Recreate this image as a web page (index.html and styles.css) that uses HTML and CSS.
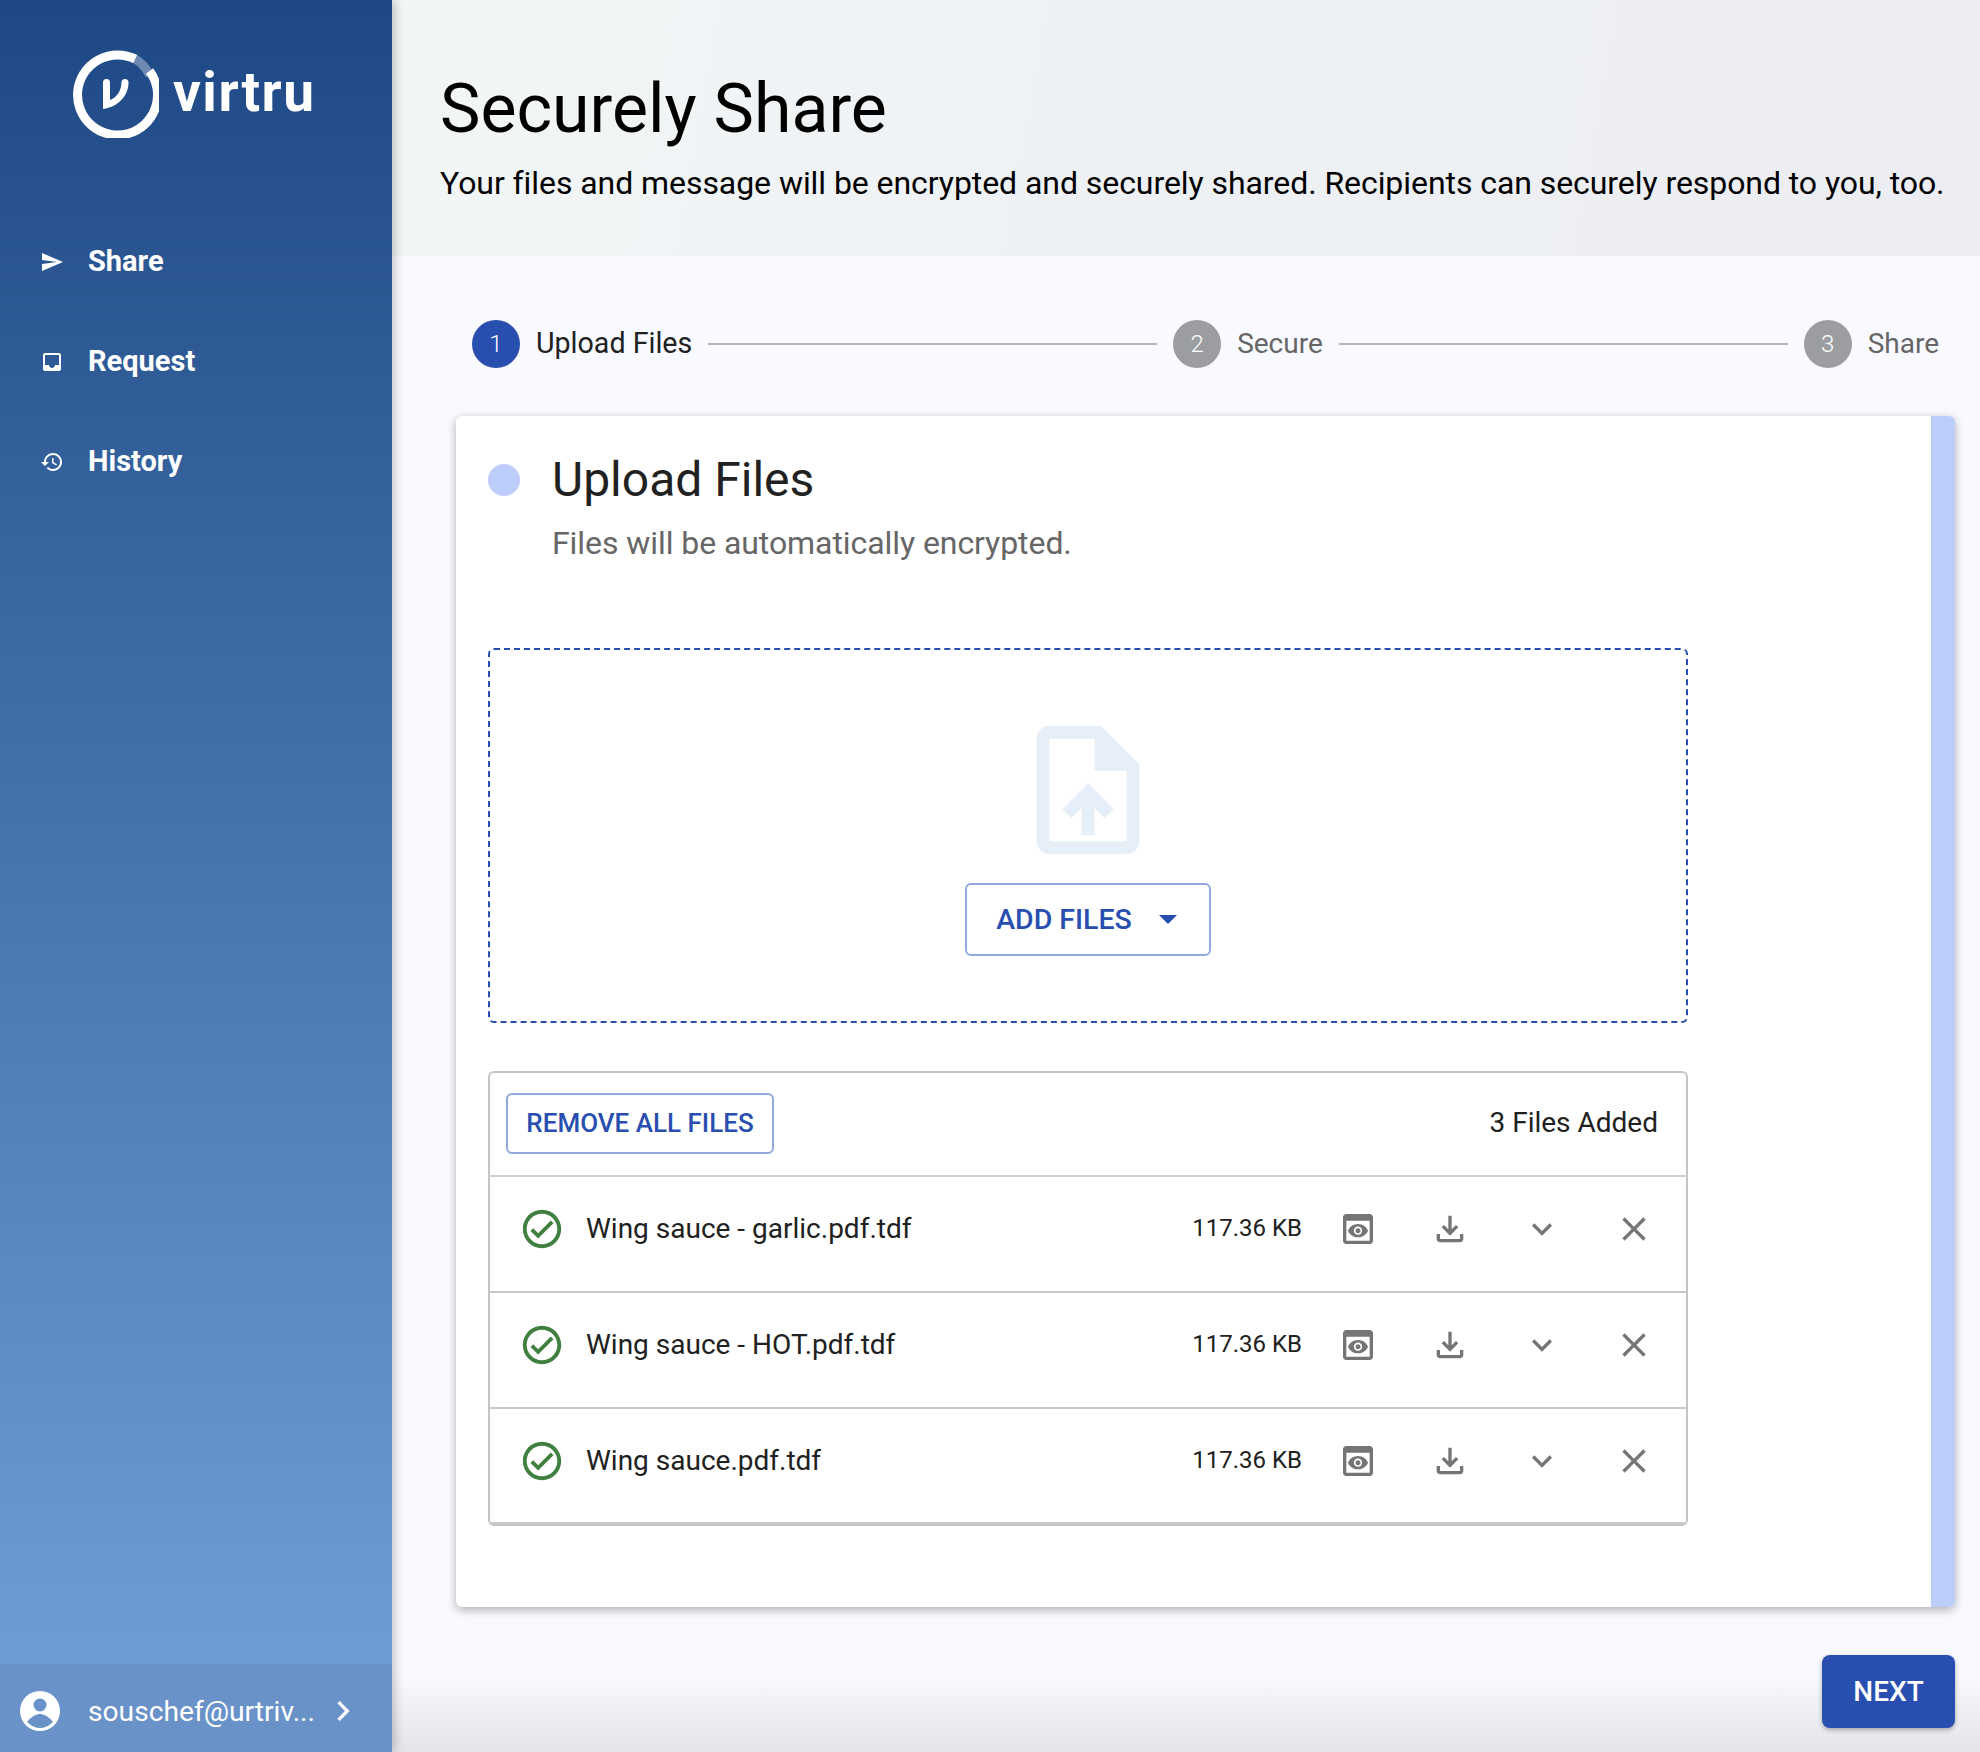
FILE: index.html
```html
<!DOCTYPE html>
<html lang="en">
<head>
<meta charset="utf-8"/>
<title>Securely Share</title>
<link rel="stylesheet" href="styles.css">
</head>
<body>
<svg class="sprite" xmlns="http://www.w3.org/2000/svg">
    <symbol id="i-preview" viewBox="0 0 24 24"><path d="M19 3H5c-1.11 0-2 .9-2 2v14c0 1.1.89 2 2 2h14c1.1 0 2-.9 2-2V5c0-1.1-.89-2-2-2zm0 16H5V7h14v12zm-5.5-6c0 .83-.67 1.5-1.5 1.5s-1.5-.67-1.5-1.5.67-1.5 1.5-1.5 1.5.67 1.5 1.5zM12 9c-2.73 0-5.06 1.66-6 4 .94 2.34 3.27 4 6 4s5.06-1.66 6-4c-.94-2.34-3.27-4-6-4zm0 6.5c-1.38 0-2.5-1.12-2.5-2.5s1.12-2.5 2.5-2.5 2.5 1.12 2.5 2.5-1.12 2.5-2.5 2.5z"/></symbol>
    <symbol id="i-download" viewBox="0 0 24 24"><path d="M18 15v3H6v-3H4v3c0 1.1.9 2 2 2h12c1.1 0 2-.9 2-2v-3h-2zm-1-4l-1.41-1.41L13 12.17V4h-2v8.17L8.41 9.59 7 11l5 5 5-5z"/></symbol>
    <symbol id="i-expand" viewBox="0 0 24 24"><path d="M16.59 8.59L12 13.17 7.41 8.59 6 10l6 6 6-6z"/></symbol>
    <symbol id="i-close" viewBox="0 0 24 24"><path d="M19 6.41L17.59 5 12 10.59 6.41 5 5 6.41 10.59 12 5 17.59 6.41 19 12 13.41 17.59 19 19 17.59 13.41 12z"/></symbol>
    <symbol id="i-check" viewBox="0 0 24 24"><path d="M12 2C6.48 2 2 6.48 2 12s4.48 10 10 10 10-4.48 10-10S17.52 2 12 2zm0 18c-4.41 0-8-3.59-8-8s3.59-8 8-8 8 3.59 8 8-3.59 8-8 8zm4.59-12.42L10 14.17l-2.59-2.58L6 13l4 4 8-8z"/></symbol>
</svg>

<div class="sidebar">
    <div class="logo">
        <svg class="logo-mark" viewBox="0 0 90 90">
            <path d="M63.5 7.5A40 40 0 1 1 45 5" transform="rotate(32 45 45)" fill="none" stroke="#fff" stroke-width="9"/>
            <path d="M63.6 9.6A40 40 0 0 1 81 27.5" fill="none" stroke="#fff" stroke-opacity="0.35" stroke-width="9"/>
            <path d="M34 34.5a3.5 3.5 0 0 1 7 0V52c6-2 11-8 11.500-17.500a3.500 3.500 0 0 1 7 0C59.500 48 49 59 34 61z" fill="#fff"/>
        </svg>
        <span class="logo-text">virtru</span>
    </div>
    <div class="nav">
        <div class="nav-item">
            <svg class="nav-icon" viewBox="0 0 24 24"><path d="M2.010 21L23 12 2.010 3 2 10l15 2-15 2z"/></svg>
            <span>Share</span>
        </div>
        <div class="nav-item">
            <svg class="nav-icon" viewBox="0 0 24 24"><path d="M19 3H4.990c-1.110 0-1.980.89-1.980 2L3 19c0 1.100.88 2 1.990 2H19c1.100 0 2-.9 2-2V5c0-1.110-.9-2-2-2zm0 12h-4c0 1.660-1.350 3-3 3s-3-1.340-3-3H4.990V5H19v10z"/></svg>
            <span>Request</span>
        </div>
        <div class="nav-item">
            <svg class="nav-icon" viewBox="0 0 24 24"><path d="M13 3c-4.970 0-9 4.030-9 9H1l3.890 3.890.07.14L9 12H6c0-3.870 3.130-7 7-7s7 3.130 7 7-3.130 7-7 7c-1.930 0-3.680-.79-4.940-2.060l-1.420 1.420C8.270 19.990 10.510 21 13 21c4.970 0 9-4.030 9-9s-4.030-9-9-9zm-1 5v5l4.280 2.540.72-1.210-3.500-2.080V8H12z"/></svg>
            <span>History</span>
        </div>
    </div>
    <div class="account">
        <svg class="avatar" viewBox="0 0 40 40">
            <circle cx="20" cy="20" r="20" fill="#fff"/>
            <circle cx="20" cy="14" r="6.500" fill="#6892c8"/>
            <path d="M7 31Q20 15 33 31Q20 43 7 31z" fill="#6892c8"/>
        </svg>
        <span class="email">souschef@urtriv...</span>
        <svg class="account-arrow" viewBox="0 0 24 24"><path d="M10 6L8.590 7.410 13.170 12l-4.580 4.590L10 18l6-6z"/></svg>
    </div>
</div>

<div class="main">
    <div class="header">
        <h1>Securely Share</h1>
        <p>Your files and message will be encrypted and securely shared. Recipients can securely respond to you, too.</p>
    </div>

    <div class="stepper">
        <div class="step active"><span class="num">1</span><span class="label">Upload Files</span></div>
        <div class="step-line"></div>
        <div class="step"><span class="num">2</span><span class="label">Secure</span></div>
        <div class="step-line"></div>
        <div class="step"><span class="num">3</span><span class="label">Share</span></div>
    </div>

    <div class="card">
        <div class="card-body">
            <div class="card-head">
                <span class="dot"></span>
                <div>
                    <h2>Upload Files</h2>
                    <p>Files will be automatically encrypted.</p>
                </div>
            </div>

            <div class="dropzone">
                <svg class="upload-icon" viewBox="0 0 24 24"><path d="M14 2H6c-1.100 0-1.990.9-1.990 2L4 20c0 1.100.89 2 1.990 2H18c1.100 0 2-.9 2-2V8l-6-6zm4 18H6V4h7v5h5v11zM8 15.010l1.410 1.410L11 14.840V19h2v-4.160l1.590 1.590L16 15.010 12.010 11z"/></svg>
                <div class="btn add-btn">
                    <span>ADD FILES</span>
                    <svg class="caret" viewBox="7 10 10 5"><path d="M7 10l5 5 5-5z"/></svg>
                </div>
            </div>

            <div class="files">
                <div class="files-head">
                    <div class="btn remove-btn">REMOVE ALL FILES</div>
                    <span class="count">3 Files Added</span>
                </div>
                <div class="file-row">
                    <svg class="check"><use href="#i-check"/></svg>
                    <span class="name">Wing sauce - garlic.pdf.tdf</span>
                    <span class="size">117.36 KB</span>
                    <div class="actions">
                        <svg><use href="#i-preview"/></svg>
                        <svg><use href="#i-download"/></svg>
                        <svg><use href="#i-expand"/></svg>
                        <svg><use href="#i-close"/></svg>
                    </div>
                </div>
                <div class="file-row">
                    <svg class="check"><use href="#i-check"/></svg>
                    <span class="name">Wing sauce - HOT.pdf.tdf</span>
                    <span class="size">117.36 KB</span>
                    <div class="actions">
                        <svg><use href="#i-preview"/></svg>
                        <svg><use href="#i-download"/></svg>
                        <svg><use href="#i-expand"/></svg>
                        <svg><use href="#i-close"/></svg>
                    </div>
                </div>
                <div class="file-row">
                    <svg class="check"><use href="#i-check"/></svg>
                    <span class="name">Wing sauce.pdf.tdf</span>
                    <span class="size">117.36 KB</span>
                    <div class="actions">
                        <svg><use href="#i-preview"/></svg>
                        <svg><use href="#i-download"/></svg>
                        <svg><use href="#i-expand"/></svg>
                        <svg><use href="#i-close"/></svg>
                    </div>
                </div>
            </div>
        </div>
        <div class="card-bar"></div>
    </div>

    <div class="footer">
        <div class="next-btn">NEXT</div>
    </div>
</div>
</body>
</html>
```

FILE: styles.css
```css
* {
    margin: 0;
    padding: 0;
    box-sizing: border-box;
}

html, body {
    width: 100%;
    height: 100%;
}

body {
    display: flex;
    height: 1752px;
    overflow: hidden;
    font-family: Roboto, "Liberation Sans", sans-serif;
    color: #212121;
    background: #f9faff;
}

.sprite {
    display: none;
}

/* sidebar */
.sidebar {
    position: relative;
    z-index: 2;
    display: flex;
    flex-direction: column;
    width: 392px;
    flex-shrink: 0;
    background: linear-gradient(180deg, #1d4885 0%, #72a1d9 100%);
    box-shadow: 2px 0 10px rgba(0, 0, 0, 0.25);
    color: #fff;
}

.logo {
    display: flex;
    align-items: center;
    height: 212px;
    padding: 48px 0 74px 69px;
}

.logo-mark {
    width: 90px;
    height: 90px;
}

.logo-text {
    margin: 0 0 3px 14px;
    font-size: 55px;
    font-weight: 700;
    line-height: 56px;
    letter-spacing: 1.500px;
}

.nav {
    flex: 1;
}

.nav-item {
    display: flex;
    align-items: center;
    gap: 24px;
    height: 100px;
    padding-left: 40px;
    font-size: 29px;
    font-weight: 700;
}

.nav-item span {
    margin-bottom: 2px;
}

.nav-icon {
    width: 24px;
    height: 24px;
    fill: #fff;
}

.account {
    display: flex;
    align-items: center;
    height: 88px;
    padding: 6px 0 0 20px;
    background: #6892c8;
    font-size: 28.200px;
}

.avatar {
    width: 40px;
    height: 40px;
}

.email {
    margin-left: 28px;
    font-weight: 400;
}

.account-arrow {
    width: 40px;
    height: 40px;
    margin-left: 8px;
    fill: #fff;
}

/* main column */
.main {
    flex: 1;
    display: flex;
    flex-direction: column;
    min-width: 0;
    background: linear-gradient(180deg, #f9faff 95.500%, #e4e5e9 100%);
}

.header {
    height: 256px;
    padding: 69px 0 0 48px;
    background: linear-gradient(100deg, #f3f6f6 0%, #eef1f4 50%, #ecedf2 100%);
    color: #000;
}

.header h1 {
    font-size: 68px;
    font-weight: 400;
    line-height: 80px;
}

.header p {
    margin-top: 10px;
    font-size: 32px;
    line-height: 48px;
    letter-spacing: -0.065px;
}

.stepper {
    display: flex;
    align-items: center;
    gap: 16px;
    margin: 64px 41px 48px 80px;
    height: 48px;
}

.step {
    display: flex;
    align-items: center;
    gap: 16px;
    font-size: 28px;
    color: #666;
}

.step .label {
    margin-bottom: 2px;
}

.step .num {
    display: flex;
    align-items: center;
    justify-content: center;
    width: 48px;
    height: 48px;
    border-radius: 50%;
    background: #9c9da1;
    color: #fff;
    font-size: 24px;
    font-weight: 300;
}

.step.active {
    font-size: 28.600px;
    color: #212121;
}

.step.active .num {
    background: #284eb0;
}

.step-line {
    flex: 1;
    height: 2px;
    background: #b5b6bb;
}

.card {
    display: flex;
    height: 1191px;
    margin: 0 25px 0 64px;
    background: #fff;
    border-radius: 6px;
    overflow: hidden;
    box-shadow: 0 3px 10px rgba(0, 0, 0, 0.3);
}

.card-body {
    flex: 1;
    padding: 32px 0 0 32px;
}

.card-bar {
    width: 24px;
    background: #bccdf9;
}

.card-head {
    display: flex;
    gap: 32px;
    height: 200px;
}

.dot {
    width: 32px;
    height: 32px;
    margin-top: 16px;
    border-radius: 50%;
    background: #bccdf9;
}

.card-head h2 {
    font-size: 48px;
    font-weight: 400;
    line-height: 64px;
}

.card-head p {
    margin-top: 11px;
    font-size: 32px;
    line-height: 40px;
    letter-spacing: -0.07px;
    color: #666;
}

.dropzone {
    display: flex;
    flex-direction: column;
    align-items: center;
    width: 1200px;
    height: 375px;
    padding-top: 63px;
    border: 2px dashed #284eb0;
    border-radius: 6px;
}

.upload-icon {
    width: 154px;
    height: 154px;
    fill: #e6eff8;
}

.btn {
    display: flex;
    align-items: center;
    justify-content: center;
    border: 2px solid #93a7dc;
    border-radius: 6px;
    color: #284eb0;
    font-weight: 500;
}

.add-btn {
    gap: 27px;
    width: 246px;
    height: 73px;
    margin-top: 16px;
    padding-right: 3px;
    font-size: 28.500px;
}

.caret {
    width: 18px;
    height: 9px;
    fill: #284eb0;
}

.files {
    width: 1200px;
    margin-top: 48px;
    border: 2px solid #c4c4c4;
    border-radius: 6px;
}

.files-head {
    display: flex;
    align-items: center;
    justify-content: space-between;
    height: 102px;
    padding: 0 28px 2px 16px;
}

.remove-btn {
    width: 268px;
    height: 61px;
    font-size: 26px;
}

.count {
    margin-bottom: 2px;
    font-size: 28px;
}

.file-row {
    display: flex;
    align-items: center;
    height: 116px;
    padding: 0 6px 10px 29px;
    border-top: 2px solid #d0d0d0;
}

.file-row + .file-row {
    border-top-color: #c8c8c8;
}

.file-row:last-child {
    height: 117px;
    padding-bottom: 9px;
    border-bottom: 2px solid #ccc;
}

.check {
    width: 46px;
    height: 46px;
    fill: #3f7f3f;
}

.name {
    flex: 1;
    margin: 0 0 2px 21px;
    font-size: 28px;
}

.size {
    font-size: 24px;
    margin: 0 10px 2px 0;
}

.actions {
    display: flex;
}

.actions svg {
    width: 40px;
    height: 40px;
    margin: 0 26px;
    fill: #757575;
}

.footer {
    display: flex;
    justify-content: flex-end;
    margin: 48px 25px 0 0;
}

.next-btn {
    display: flex;
    align-items: center;
    justify-content: center;
    width: 133px;
    height: 73px;
    border-radius: 8px;
    background: #284eb0;
    color: #fff;
    font-size: 28px;
    font-weight: 500;
    box-shadow: 0 2px 5px rgba(0, 0, 0, 0.3);
}
```
